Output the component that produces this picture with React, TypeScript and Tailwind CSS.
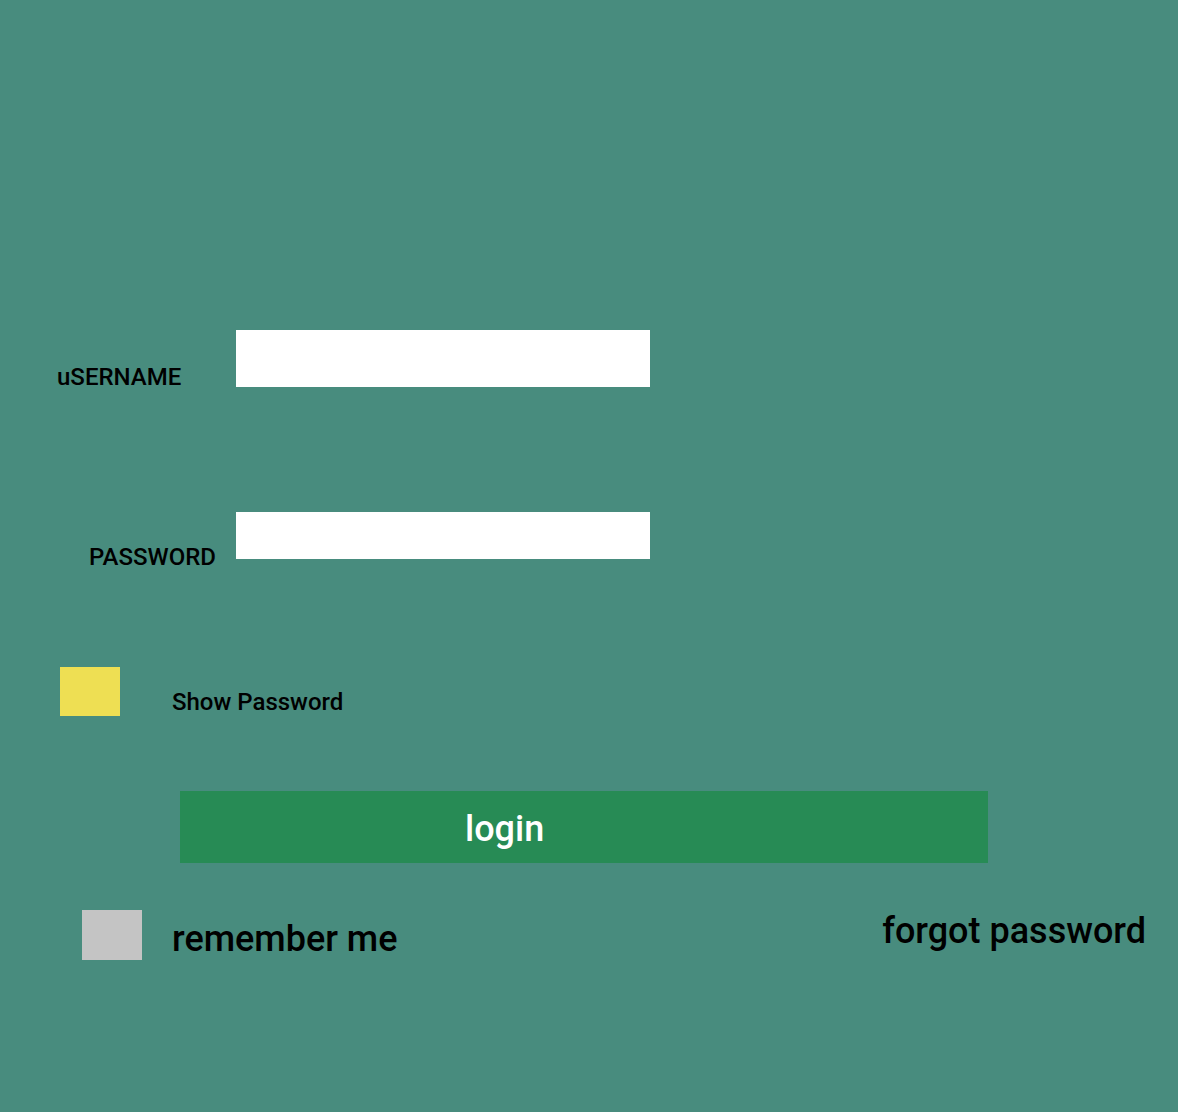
export default function App() {
  return (
    <main className="min-h-screen bg-[#488c7e] pt-[330px] pb-16 font-['Roboto',sans-serif] font-medium text-black">
      <form onSubmit={(e) => e.preventDefault()}>
        <div className="flex items-end">
          <label htmlFor="username" className="-mb-1 ml-[57px] w-[179px] text-2xl leading-7">
            uSERNAME
          </label>
          <input id="username" type="text" className="h-[57px] w-[414px] bg-white px-4 text-2xl outline-none" />
        </div>

        <div className="mt-[125px] flex items-end">
          <label htmlFor="password" className="-mb-3 ml-[89px] w-[147px] text-2xl leading-7">
            PASSWORD
          </label>
          <input id="password" type="password" className="h-[47px] w-[414px] bg-white px-4 text-2xl outline-none" />
        </div>

        <div className="mt-[108px] ml-[60px] flex items-end">
          <input id="show" type="checkbox" className="h-[49px] w-[60px] appearance-none bg-[#eedf53]" />
          <label htmlFor="show" className="ml-[52px] text-2xl leading-7">
            Show Password
          </label>
        </div>

        <button type="submit" className="mt-[75px] mr-[190px] ml-[180px] flex h-[72px] w-[calc(100%-370px)] items-center bg-[#278b55] pt-1 pl-[285px] text-4xl text-white">
          login
        </button>

        <div className="mt-[47px] mr-8 ml-[82px] flex items-start justify-between">
          <div className="flex items-center">
            <input id="remember" type="checkbox" className="h-[50px] w-[60px] appearance-none bg-[#c4c4c4]" />
            <label htmlFor="remember" className="ml-[30px] pt-2 text-4xl">
              remember me
            </label>
          </div>
          <a href="#forgot" className="text-4xl leading-[42px]">
            forgot password
          </a>
        </div>
      </form>
    </main>
  );
}
